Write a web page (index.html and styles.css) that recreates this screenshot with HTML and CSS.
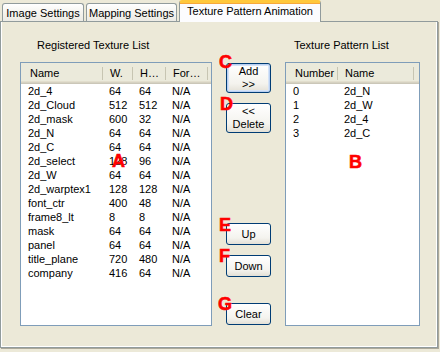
FILE: index.html
```html
<!DOCTYPE html>
<html lang="en">
<head>
  <meta charset="UTF-8" />
  <title>Texture Pattern Animation</title>
  <link rel="stylesheet" href="styles.css">
</head>
<body>

<div class="window">
  <div class="tabs">
    <div class="tab">Image Settings</div>
    <div class="tab tab-wide">Mapping Settings</div>
    <div class="tab active">Texture Pattern Animation</div>
  </div>

  <div class="panel">
    <div class="label label-left">Registered Texture List</div>
    <div></div>
    <div class="label label-right">Texture Pattern List</div>

    <div class="list">
      <div class="lv-head tex-cols">
        <span>Name</span><span>W.</span><span>H…</span><span>For…</span><span></span>
      </div>
      <div class="lv-row tex-cols"><span>2d_4</span><span>64</span><span>64</span><span>N/A</span></div>
      <div class="lv-row tex-cols"><span>2d_Cloud</span><span>512</span><span>512</span><span>N/A</span></div>
      <div class="lv-row tex-cols"><span>2d_mask</span><span>600</span><span>32</span><span>N/A</span></div>
      <div class="lv-row tex-cols"><span>2d_N</span><span>64</span><span>64</span><span>N/A</span></div>
      <div class="lv-row tex-cols"><span>2d_C</span><span>64</span><span>64</span><span>N/A</span></div>
      <div class="lv-row tex-cols"><span>2d_select</span><span>128</span><span>96</span><span>N/A</span></div>
      <div class="lv-row tex-cols"><span>2d_W</span><span>64</span><span>64</span><span>N/A</span></div>
      <div class="lv-row tex-cols"><span>2d_warptex1</span><span>128</span><span>128</span><span>N/A</span></div>
      <div class="lv-row tex-cols"><span>font_ctr</span><span>400</span><span>48</span><span>N/A</span></div>
      <div class="lv-row tex-cols"><span>frame8_lt</span><span>8</span><span>8</span><span>N/A</span></div>
      <div class="lv-row tex-cols"><span>mask</span><span>64</span><span>64</span><span>N/A</span></div>
      <div class="lv-row tex-cols"><span>panel</span><span>64</span><span>64</span><span>N/A</span></div>
      <div class="lv-row tex-cols"><span>title_plane</span><span>720</span><span>480</span><span>N/A</span></div>
      <div class="lv-row tex-cols"><span>company</span><span>416</span><span>64</span><span>N/A</span></div>
    </div>

    <div class="buttons">
      <button class="btn btn-tall btn-focus">Add<br>&gt;&gt;</button>
      <button class="btn btn-tall btn-delete">&lt;&lt;<br>Delete</button>
      <button class="btn btn-up">Up</button>
      <button class="btn btn-down">Down</button>
      <button class="btn btn-clear">Clear</button>
    </div>

    <div class="list">
      <div class="lv-head pat-cols">
        <span>Number</span><span>Name</span><span></span>
      </div>
      <div class="lv-row pat-cols"><span>0</span><span>2d_N</span></div>
      <div class="lv-row pat-cols"><span>1</span><span>2d_W</span></div>
      <div class="lv-row pat-cols"><span>2</span><span>2d_4</span></div>
      <div class="lv-row pat-cols"><span>3</span><span>2d_C</span></div>
    </div>
  </div>

  <!-- annotation letters -->
  <span class="mark mark-a">A</span>
  <span class="mark mark-b">B</span>
  <span class="mark mark-c">C</span>
  <span class="mark mark-d">D</span>
  <span class="mark mark-e">E</span>
  <span class="mark mark-f">F</span>
  <span class="mark mark-g">G</span>
</div>

</body>
</html>
```

FILE: styles.css
```css
body {
  margin: 0;
  background: #ece9d8;
  font-family: 'Liberation Sans', Arial, sans-serif;
  font-size: 11px;
  color: #000;
}

.window {
  position: relative;
  width: 440px;
  height: 352px;
}

/* tab strip */
.tabs {
  display: flex;
  align-items: flex-end;
  height: 21px;
  padding-left: 2px;
  position: relative;
  z-index: 1;
}

.tab {
  box-sizing: border-box;
  width: 82px;
  height: 18px;
  margin-right: 2px;
  border: 1px solid #919b9c;
  border-bottom: none;
  border-radius: 3px 3px 0 0;
  background: linear-gradient(#ffffff, #f3f2ec 60%, #ecebe5);
  text-align: center;
  line-height: 18px;
}

.tab-wide {
  width: 91px;
}

.tab.active {
  width: 142px;
  height: 22px;
  margin-bottom: -1px;
  border-top: 3px solid #ffc83c;
  box-shadow: inset 0 1px 0 #f7a83c;
  background: #fcfcfe;
  line-height: 16px;
}

/* tab page */
.panel {
  box-sizing: border-box;
  width: 438px;
  height: 327px;
  border: 1px solid #919b9c;
  box-shadow: inset -1px -1px 0 #ffffff, inset 1px 0 0 #ffffff, 1px 1px 0 #aca899;
  padding: 17px 0 0 19px;
  display: grid;
  grid-template-columns: 192px 45px 135px;
  grid-template-rows: 13px 264px;
  column-gap: 14px;
  row-gap: 10px;
}

.label {
  line-height: 13px;
  white-space: nowrap;
}

.label-left {
  padding-left: 17px;
}

.label-right {
  padding-left: 9px;
}

/* list views */
.list {
  box-sizing: border-box;
  border: 1px solid #7f9db9;
  background: #ffffff;
  overflow: hidden;
}

.tex-cols {
  display: grid;
  grid-template-columns: 82px 30px 33px 42px 1fr;
}

.pat-cols {
  display: grid;
  grid-template-columns: 52px 76px 1fr;
}

.lv-head {
  height: 21px;
  background: #ebeadb;
  box-shadow: inset 0 -1px 0 #cbc7b8, inset 0 -2px 0 #d6d2c2, inset 0 -3px 0 #e2decd;
  line-height: 21px;
}

.lv-head span {
  position: relative;
  padding-left: 7px;
  white-space: nowrap;
  overflow: hidden;
}

.lv-head span:first-child {
  padding-left: 9px;
}

.lv-head span:not(:last-child)::after {
  content: "";
  position: absolute;
  right: 0;
  top: 4px;
  width: 1px;
  height: 13px;
  background: #c7c5b2;
  box-shadow: 1px 0 0 #ffffff;
}

.lv-row {
  height: 14px;
  line-height: 14px;
}

.lv-row span {
  padding-left: 6px;
  white-space: nowrap;
}

.lv-row span:first-child {
  padding-left: 7px;
}

/* buttons */
.buttons {
  display: flex;
  flex-direction: column;
}

.btn {
  box-sizing: border-box;
  width: 45px;
  height: 22px;
  padding: 0;
  border: 1px solid #003c74;
  border-radius: 3px;
  background: linear-gradient(#ffffff, #f4f3ee 70%, #e3e0d6);
  font-family: inherit;
  font-size: 11px;
  line-height: 13px;
  color: #000;
}

.btn-tall {
  height: 30px;
  margin-top: 1px;
}

.btn-focus {
  box-shadow: inset 0 0 0 1px #b9d0f2, inset 0 0 0 2px #d5e3f7;
}

.btn-delete {
  margin-top: 10px;
}

.btn-up {
  margin-top: 90px;
}

.btn-down {
  margin-top: 10px;
}

.btn-clear {
  margin-top: 26px;
}

/* red annotation letters laid over the dialog */
.mark {
  position: absolute;
  font-family: 'Liberation Sans', Arial, sans-serif;
  font-size: 18px;
  font-weight: bold;
  line-height: 18px;
  color: #ff0000;
  -webkit-text-stroke: 0.6px #ff0000;
}

.mark-a { left: 112px; top: 152px; }
.mark-b { left: 349px; top: 153px; }
.mark-c { left: 219px; top: 53px; }
.mark-d { left: 220px; top: 95px; }
.mark-e { left: 219px; top: 216px; }
.mark-f { left: 219px; top: 247px; }
.mark-g { left: 218px; top: 295px; }
```
